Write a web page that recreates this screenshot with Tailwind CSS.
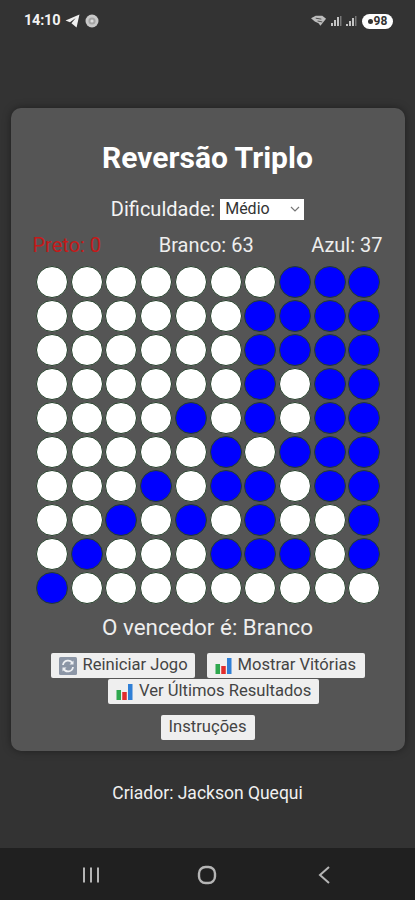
<!doctype html>
<html lang="pt">
<head>
<meta charset="utf-8">
<script src="https://cdn.jsdelivr.net/npm/@tailwindcss/browser@4"></script>
</head>
<body class="m-0 bg-[#333333]">
<div class="flex flex-col w-[415px] h-[900px] overflow-hidden bg-[#333333] font-['Roboto',sans-serif] text-white">

  <!-- status bar -->
  <div class="flex items-center justify-between h-[42px] pl-[24px] pr-[22px] shrink-0">
    <div class="flex items-center gap-[5px]">
      <span class="text-[14.5px] font-bold leading-none tracking-[-0.2px] text-[#f2f2f2]">14:10</span>
      <svg width="15" height="14" viewBox="0 0 14 13"><path d="M13.500 0.500 L0.500 6 L4.600 7.600 L10 3.600 L6 8.600 L10.800 12.500 Z" fill="#f0f0f0"/></svg>
      <svg width="14" height="14" viewBox="0 0 14 14"><circle cx="7" cy="7" r="6.500" fill="#c9c9c9"/><circle cx="7" cy="7" r="3.600" fill="#a5a5a5"/><circle cx="7" cy="7" r="1.600" fill="#dddddd"/></svg>
    </div>
    <div class="flex items-center gap-[3px]">
      <svg width="16" height="12" viewBox="0 0 17 12"><path d="M0 3 L5 0.500 L12 0.500 L16 3.500 L10 11 L8 8.500 L4 6.500 Z" fill="#bdbdbd"/><path d="M5 3 L11 4 M7 6 L12 7" stroke="#444444" stroke-width="1"/></svg>
      <svg width="12" height="12" viewBox="0 0 12 12"><path d="M1 11 h2 v-3 h-2 z M4 11 h2 v-6 h-2 z M7 11 h2 v-9 h-2 z" fill="#c4c4c4"/><path d="M10 11 h1.500 v-10 h-1.500 z" fill="#777777"/></svg>
      <svg width="12" height="12" viewBox="0 0 12 12"><path d="M1 11 h2 v-2 h-2 z M4 11 h2 v-5 h-2 z M7 11 h2 v-8 h-2 z" fill="#c4c4c4"/><path d="M10 11 h1.500 v-10 h-1.500 z" fill="#777777"/></svg>
      <div class="flex items-center justify-center gap-[1px] w-[31px] h-[15px] ml-[2px] rounded-full bg-white">
        <span class="w-[5px] h-[5px] rounded-full bg-[#333333]"></span>
        <span class="text-[12px] font-bold leading-none text-[#333333]">98</span>
      </div>
    </div>
  </div>

  <!-- main -->
  <main class="flex-1 flex flex-col items-center">
    <section class="flex flex-col items-center w-[394px] h-[643px] mt-[66px] rounded-[10px] bg-[#555555] shadow-[0_0_8px_rgba(0,0,0,0.4)]">
      <h1 class="mt-[32px] text-[30px] leading-[36px] font-bold text-white">Reversão Triplo</h1>

      <div class="flex items-center gap-[5px] mt-[22px] h-[22px]">
        <label class="text-[20px] leading-[22px] text-[#f4f4f4]">Dificuldade:</label>
        <div class="relative">
          <select class="block w-[84px] h-[21px] pl-[5px] appearance-none rounded-none bg-white text-[#333333] text-[16px] leading-none font-['Roboto',sans-serif]">
            <option>Médio</option>
          </select>
          <svg class="absolute right-[4px] top-[7px]" width="10" height="7" viewBox="0 0 10 7"><path d="M1 1 L5 5 L9 1" fill="none" stroke="#777777" stroke-width="1.200"/></svg>
        </div>
      </div>

      <div class="flex justify-between w-[350px] mt-[14px] text-[20px] leading-[22px] text-[#eeeeee]">
        <span class="text-[#c41a1a]">Preto: 0</span>
        <span>Branco: 63</span>
        <span>Azul: 37</span>
      </div>

      <div class="grid grid-cols-10 gap-y-[2px] w-[347px] ml-[4px] mt-[10px]">
        <!-- 1 -->
        <div class="w-[32px] h-[32px] rounded-full bg-white border border-[#26402b]"></div><div class="w-[32px] h-[32px] rounded-full bg-white border border-[#26402b]"></div><div class="w-[32px] h-[32px] rounded-full bg-white border border-[#26402b]"></div><div class="w-[32px] h-[32px] rounded-full bg-white border border-[#26402b]"></div><div class="w-[32px] h-[32px] rounded-full bg-white border border-[#26402b]"></div><div class="w-[32px] h-[32px] rounded-full bg-white border border-[#26402b]"></div><div class="w-[32px] h-[32px] rounded-full bg-white border border-[#26402b]"></div><div class="w-[32px] h-[32px] rounded-full bg-[#0000ff] border border-[#26402b]"></div><div class="w-[32px] h-[32px] rounded-full bg-[#0000ff] border border-[#26402b]"></div><div class="w-[32px] h-[32px] rounded-full bg-[#0000ff] border border-[#26402b]"></div>
        <!-- 2 -->
        <div class="w-[32px] h-[32px] rounded-full bg-white border border-[#26402b]"></div><div class="w-[32px] h-[32px] rounded-full bg-white border border-[#26402b]"></div><div class="w-[32px] h-[32px] rounded-full bg-white border border-[#26402b]"></div><div class="w-[32px] h-[32px] rounded-full bg-white border border-[#26402b]"></div><div class="w-[32px] h-[32px] rounded-full bg-white border border-[#26402b]"></div><div class="w-[32px] h-[32px] rounded-full bg-white border border-[#26402b]"></div><div class="w-[32px] h-[32px] rounded-full bg-[#0000ff] border border-[#26402b]"></div><div class="w-[32px] h-[32px] rounded-full bg-[#0000ff] border border-[#26402b]"></div><div class="w-[32px] h-[32px] rounded-full bg-[#0000ff] border border-[#26402b]"></div><div class="w-[32px] h-[32px] rounded-full bg-[#0000ff] border border-[#26402b]"></div>
        <!-- 3 -->
        <div class="w-[32px] h-[32px] rounded-full bg-white border border-[#26402b]"></div><div class="w-[32px] h-[32px] rounded-full bg-white border border-[#26402b]"></div><div class="w-[32px] h-[32px] rounded-full bg-white border border-[#26402b]"></div><div class="w-[32px] h-[32px] rounded-full bg-white border border-[#26402b]"></div><div class="w-[32px] h-[32px] rounded-full bg-white border border-[#26402b]"></div><div class="w-[32px] h-[32px] rounded-full bg-white border border-[#26402b]"></div><div class="w-[32px] h-[32px] rounded-full bg-[#0000ff] border border-[#26402b]"></div><div class="w-[32px] h-[32px] rounded-full bg-[#0000ff] border border-[#26402b]"></div><div class="w-[32px] h-[32px] rounded-full bg-[#0000ff] border border-[#26402b]"></div><div class="w-[32px] h-[32px] rounded-full bg-[#0000ff] border border-[#26402b]"></div>
        <!-- 4 -->
        <div class="w-[32px] h-[32px] rounded-full bg-white border border-[#26402b]"></div><div class="w-[32px] h-[32px] rounded-full bg-white border border-[#26402b]"></div><div class="w-[32px] h-[32px] rounded-full bg-white border border-[#26402b]"></div><div class="w-[32px] h-[32px] rounded-full bg-white border border-[#26402b]"></div><div class="w-[32px] h-[32px] rounded-full bg-white border border-[#26402b]"></div><div class="w-[32px] h-[32px] rounded-full bg-white border border-[#26402b]"></div><div class="w-[32px] h-[32px] rounded-full bg-[#0000ff] border border-[#26402b]"></div><div class="w-[32px] h-[32px] rounded-full bg-white border border-[#26402b]"></div><div class="w-[32px] h-[32px] rounded-full bg-[#0000ff] border border-[#26402b]"></div><div class="w-[32px] h-[32px] rounded-full bg-[#0000ff] border border-[#26402b]"></div>
        <!-- 5 -->
        <div class="w-[32px] h-[32px] rounded-full bg-white border border-[#26402b]"></div><div class="w-[32px] h-[32px] rounded-full bg-white border border-[#26402b]"></div><div class="w-[32px] h-[32px] rounded-full bg-white border border-[#26402b]"></div><div class="w-[32px] h-[32px] rounded-full bg-white border border-[#26402b]"></div><div class="w-[32px] h-[32px] rounded-full bg-[#0000ff] border border-[#26402b]"></div><div class="w-[32px] h-[32px] rounded-full bg-white border border-[#26402b]"></div><div class="w-[32px] h-[32px] rounded-full bg-[#0000ff] border border-[#26402b]"></div><div class="w-[32px] h-[32px] rounded-full bg-white border border-[#26402b]"></div><div class="w-[32px] h-[32px] rounded-full bg-[#0000ff] border border-[#26402b]"></div><div class="w-[32px] h-[32px] rounded-full bg-[#0000ff] border border-[#26402b]"></div>
        <!-- 6 -->
        <div class="w-[32px] h-[32px] rounded-full bg-white border border-[#26402b]"></div><div class="w-[32px] h-[32px] rounded-full bg-white border border-[#26402b]"></div><div class="w-[32px] h-[32px] rounded-full bg-white border border-[#26402b]"></div><div class="w-[32px] h-[32px] rounded-full bg-white border border-[#26402b]"></div><div class="w-[32px] h-[32px] rounded-full bg-white border border-[#26402b]"></div><div class="w-[32px] h-[32px] rounded-full bg-[#0000ff] border border-[#26402b]"></div><div class="w-[32px] h-[32px] rounded-full bg-white border border-[#26402b]"></div><div class="w-[32px] h-[32px] rounded-full bg-[#0000ff] border border-[#26402b]"></div><div class="w-[32px] h-[32px] rounded-full bg-[#0000ff] border border-[#26402b]"></div><div class="w-[32px] h-[32px] rounded-full bg-[#0000ff] border border-[#26402b]"></div>
        <!-- 7 -->
        <div class="w-[32px] h-[32px] rounded-full bg-white border border-[#26402b]"></div><div class="w-[32px] h-[32px] rounded-full bg-white border border-[#26402b]"></div><div class="w-[32px] h-[32px] rounded-full bg-white border border-[#26402b]"></div><div class="w-[32px] h-[32px] rounded-full bg-[#0000ff] border border-[#26402b]"></div><div class="w-[32px] h-[32px] rounded-full bg-white border border-[#26402b]"></div><div class="w-[32px] h-[32px] rounded-full bg-[#0000ff] border border-[#26402b]"></div><div class="w-[32px] h-[32px] rounded-full bg-[#0000ff] border border-[#26402b]"></div><div class="w-[32px] h-[32px] rounded-full bg-white border border-[#26402b]"></div><div class="w-[32px] h-[32px] rounded-full bg-[#0000ff] border border-[#26402b]"></div><div class="w-[32px] h-[32px] rounded-full bg-[#0000ff] border border-[#26402b]"></div>
        <!-- 8 -->
        <div class="w-[32px] h-[32px] rounded-full bg-white border border-[#26402b]"></div><div class="w-[32px] h-[32px] rounded-full bg-white border border-[#26402b]"></div><div class="w-[32px] h-[32px] rounded-full bg-[#0000ff] border border-[#26402b]"></div><div class="w-[32px] h-[32px] rounded-full bg-white border border-[#26402b]"></div><div class="w-[32px] h-[32px] rounded-full bg-[#0000ff] border border-[#26402b]"></div><div class="w-[32px] h-[32px] rounded-full bg-white border border-[#26402b]"></div><div class="w-[32px] h-[32px] rounded-full bg-[#0000ff] border border-[#26402b]"></div><div class="w-[32px] h-[32px] rounded-full bg-white border border-[#26402b]"></div><div class="w-[32px] h-[32px] rounded-full bg-white border border-[#26402b]"></div><div class="w-[32px] h-[32px] rounded-full bg-[#0000ff] border border-[#26402b]"></div>
        <!-- 9 -->
        <div class="w-[32px] h-[32px] rounded-full bg-white border border-[#26402b]"></div><div class="w-[32px] h-[32px] rounded-full bg-[#0000ff] border border-[#26402b]"></div><div class="w-[32px] h-[32px] rounded-full bg-white border border-[#26402b]"></div><div class="w-[32px] h-[32px] rounded-full bg-white border border-[#26402b]"></div><div class="w-[32px] h-[32px] rounded-full bg-white border border-[#26402b]"></div><div class="w-[32px] h-[32px] rounded-full bg-[#0000ff] border border-[#26402b]"></div><div class="w-[32px] h-[32px] rounded-full bg-[#0000ff] border border-[#26402b]"></div><div class="w-[32px] h-[32px] rounded-full bg-[#0000ff] border border-[#26402b]"></div><div class="w-[32px] h-[32px] rounded-full bg-white border border-[#26402b]"></div><div class="w-[32px] h-[32px] rounded-full bg-[#0000ff] border border-[#26402b]"></div>
        <!-- 10 -->
        <div class="w-[32px] h-[32px] rounded-full bg-[#0000ff] border border-[#26402b]"></div><div class="w-[32px] h-[32px] rounded-full bg-white border border-[#26402b]"></div><div class="w-[32px] h-[32px] rounded-full bg-white border border-[#26402b]"></div><div class="w-[32px] h-[32px] rounded-full bg-white border border-[#26402b]"></div><div class="w-[32px] h-[32px] rounded-full bg-white border border-[#26402b]"></div><div class="w-[32px] h-[32px] rounded-full bg-white border border-[#26402b]"></div><div class="w-[32px] h-[32px] rounded-full bg-white border border-[#26402b]"></div><div class="w-[32px] h-[32px] rounded-full bg-white border border-[#26402b]"></div><div class="w-[32px] h-[32px] rounded-full bg-white border border-[#26402b]"></div><div class="w-[32px] h-[32px] rounded-full bg-white border border-[#26402b]"></div>
      </div>

      <p class="mt-[10px] text-[22.4px] leading-[26px] text-[#eeeeee]">O vencedor é: Branco</p>

      <div class="flex gap-[12px] mt-[13px]">
        <button class="flex items-center gap-[6px] h-[25px] w-[144px] pl-[8px] bg-[#efefef] rounded-[2px] text-[16.6px] text-[#444444] whitespace-nowrap">
          <svg width="18" height="18" viewBox="0 0 18 18"><rect width="18" height="18" rx="1.500" fill="#8c96a6"/><path d="M4 8 A5 5 0 0 1 13.500 6.500 M14 10 A5 5 0 0 1 4.500 11.500" fill="none" stroke="#eef0f3" stroke-width="1.800"/><path d="M14.500 3.500 L14.500 7.500 L10.500 7.500 Z M3.500 14.500 L3.500 10.500 L7.500 10.500 Z" fill="#eef0f3"/></svg>
          Reiniciar Jogo
        </button>
        <button class="flex items-center gap-[6px] h-[25px] w-[158px] pl-[8px] bg-[#efefef] rounded-[2px] text-[16.6px] text-[#444444] whitespace-nowrap">
          <svg width="17" height="17" viewBox="0 0 17 17"><rect x="0.500" y="7" width="4.500" height="10" fill="#2fa84f"/><rect x="6.250" y="9" width="4.500" height="8" fill="#e02d2d"/><rect x="12" y="1" width="4.500" height="16" fill="#2f7fd6"/></svg>
          Mostrar Vitórias
        </button>
      </div>
      <button class="flex items-center gap-[6px] h-[25px] w-[211px] mt-[1px] ml-[12px] pl-[8px] bg-[#efefef] rounded-[2px] text-[16.6px] text-[#444444] whitespace-nowrap">
        <svg width="17" height="17" viewBox="0 0 17 17"><rect x="0.500" y="7" width="4.500" height="10" fill="#2fa84f"/><rect x="6.250" y="9" width="4.500" height="8" fill="#e02d2d"/><rect x="12" y="1" width="4.500" height="16" fill="#2f7fd6"/></svg>
        Ver Últimos Resultados
      </button>
      <button class="flex items-center justify-center h-[25px] w-[94px] mt-[11px] bg-[#efefef] rounded-[2px] text-[16.6px] text-[#444444]">Instruções</button>
    </section>

    <p class="mt-[32px] text-[17.5px] leading-[20px] text-[#f0f0f0]">Criador: Jackson Quequi</p>
  </main>

  <!-- nav bar -->
  <nav class="flex items-center justify-center gap-[96px] h-[52px] pt-[2px] shrink-0 bg-[#202020]">
    <svg class="-translate-x-[1px]" width="20" height="18" viewBox="0 0 20 18"><path d="M3 1.500 V16.500 M10 1.500 V16.500 M17 1.500 V16.500" stroke="#b5b5b5" stroke-width="2"/></svg>
    <svg class="-translate-x-[1px]" width="20" height="20" viewBox="0 0 20 20"><rect x="2" y="2" width="16" height="16" rx="6.500" fill="none" stroke="#b5b5b5" stroke-width="2.400"/></svg>
    <svg width="20" height="20" viewBox="0 0 20 20"><path d="M15 2 L6 10 L15 18" fill="none" stroke="#b5b5b5" stroke-width="2"/></svg>
  </nav>
</div>
</body>
</html>
